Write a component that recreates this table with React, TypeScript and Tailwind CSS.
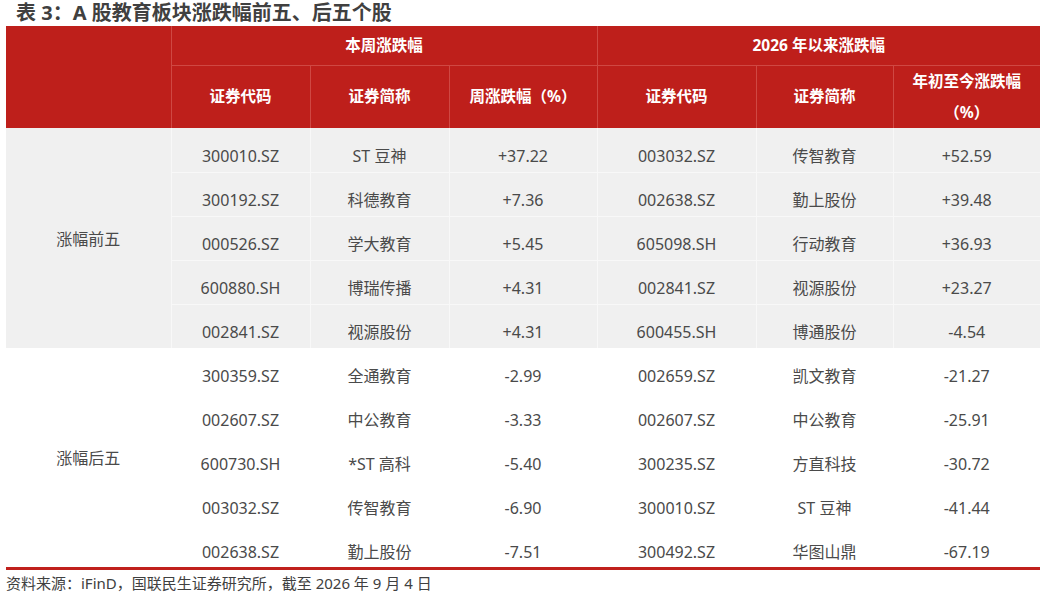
const font = { fontFamily: '"Noto Sans", "Noto Sans CJK SC", sans-serif' };

type Row = [string, string, string, string, string, string];

const topRows: Row[] = [
  ['300010.SZ', 'ST 豆神', '+37.22', '003032.SZ', '传智教育', '+52.59'],
  ['300192.SZ', '科德教育', '+7.36', '002638.SZ', '勤上股份', '+39.48'],
  ['000526.SZ', '学大教育', '+5.45', '605098.SH', '行动教育', '+36.93'],
  ['600880.SH', '博瑞传播', '+4.31', '002841.SZ', '视源股份', '+23.27'],
  ['002841.SZ', '视源股份', '+4.31', '600455.SH', '博通股份', '-4.54'],
];

const bottomRows: Row[] = [
  ['300359.SZ', '全通教育', '-2.99', '002659.SZ', '凯文教育', '-21.27'],
  ['002607.SZ', '中公教育', '-3.33', '002607.SZ', '中公教育', '-25.91'],
  ['600730.SH', '*ST 高科', '-5.40', '300235.SZ', '方直科技', '-30.72'],
  ['003032.SZ', '传智教育', '-6.90', '300010.SZ', 'ST 豆神', '-41.44'],
  ['002638.SZ', '勤上股份', '-7.51', '300492.SZ', '华图山鼎', '-67.19'],
];

function Group({ label, rows, gray }: { label: string; rows: Row[]; gray: boolean }) {
  const rowBg = gray ? 'bg-[#F0F0F0]' : 'bg-white';
  const line = gray ? 'border-[#F8F8F8]' : 'border-white';
  return (
    <>
      {rows.map((r, i) => (
        <tr key={i} className={`h-[44px] ${rowBg}`}>
          {i === 0 && (
            <td rowSpan={rows.length} className={`border-r ${line} pt-[2px] text-center align-middle`}>
              {label}
            </td>
          )}
          {r.map((c, j) => (
            <td
              key={j}
              className={`pt-[12px] text-center align-middle ${line} ${j < 5 ? 'border-r' : ''} ${i < rows.length - 1 ? 'border-b' : ''}`}
            >
              {c}
            </td>
          ))}
        </tr>
      ))}
    </>
  );
}

export default function App() {
  const th = 'bg-[#BE1F1B] text-white font-bold text-[15.5px] text-center align-middle border-[#CF4843]';
  return (
    <div className="w-[1046px] h-[595px] bg-white text-[#4A4A4A]" style={font}>
      {/* Title */}
      <div className="h-[26px] pl-[16px] text-[20px] font-bold leading-[26px] text-[#404040]">
        表 3：A 股教育板块涨跌幅前五、后五个股
      </div>

      <table className="ml-[6px] w-[1034px] table-fixed border-collapse border-b-[3px] border-[#C0201C] text-[16px]">
        <colgroup>
          <col className="w-[165px]" />
          <col className="w-[139px]" />
          <col className="w-[139px]" />
          <col className="w-[148px]" />
          <col className="w-[159px]" />
          <col className="w-[137px]" />
          <col className="w-[147px]" />
        </colgroup>
        <thead>
          <tr className="h-[39px]">
            <th rowSpan={2} className={`${th} border-r`}></th>
            <th colSpan={3} className={`${th} border-r border-b`}>本周涨跌幅</th>
            <th colSpan={3} className={`${th} border-b`}>2026 年以来涨跌幅</th>
          </tr>
          <tr className="h-[63px]">
            <th className={`${th} border-r`}>证券代码</th>
            <th className={`${th} border-r`}>证券简称</th>
            <th className={`${th} border-r`}>周涨跌幅（%）</th>
            <th className={`${th} border-r`}>证券代码</th>
            <th className={`${th} border-r`}>证券简称</th>
            <th className={`${th} leading-[31px]`}>
              年初至今涨跌幅
              <br />
              （%）
            </th>
          </tr>
        </thead>
        <tbody>
          <Group label="涨幅前五" rows={topRows} gray />
          <Group label="涨幅后五" rows={bottomRows} gray={false} />
        </tbody>
      </table>

      {/* Source */}
      <div className="pl-[6px] pt-[2px] text-[15px] leading-[22px] text-[#404040]">
        资料来源：iFinD，国联民生证券研究所，截至 2026 年 9 月 4 日
      </div>
    </div>
  );
}
